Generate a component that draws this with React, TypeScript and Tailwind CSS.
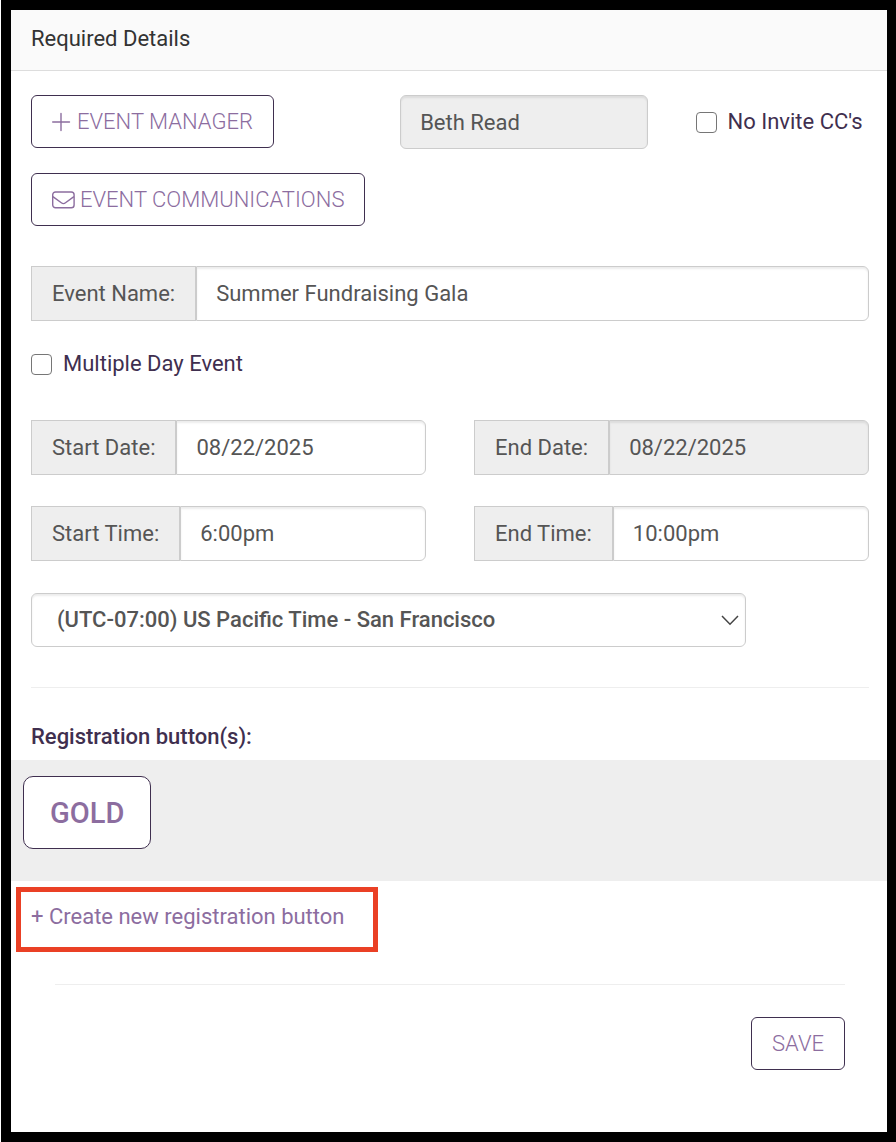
import { FC, ReactNode, useState } from "react";
import clsx from "clsx";

const buttonStyles =
  "inline-flex items-center h-[53px] px-5 border border-[#3f2f4f] rounded-md bg-white text-[#8c6d9f] font-light uppercase whitespace-nowrap";

const inputStyles =
  "w-full min-w-0 border border-[#ccc] text-[#555] shadow-[inset_0_2px_2px_rgba(0,0,0,0.075)] outline-none";

const PlusIcon: FC = () => (
  <svg
    className="w-[20px] h-[20px] mr-[5px]"
    viewBox="0 0 20 20"
    fill="none"
    stroke="currentColor"
    strokeWidth="1.4"
    strokeLinecap="round"
    aria-hidden="true"
  >
    <path d="M9 1.5v17M.7 10h16.8" />
  </svg>
);

const EnvelopeIcon: FC = () => (
  <svg
    className="w-[24px] h-[20px] mr-[4px]"
    viewBox="0 0 24 20"
    fill="none"
    stroke="currentColor"
    strokeWidth="1.4"
    strokeLinejoin="round"
    aria-hidden="true"
  >
    <rect x=".7" y="2" width="21.4" height="15.8" rx="2.8" />
    <path d="M.9 6.6l8.4 6.2c1.3 1 2.9 1 4.2 0l8.4-6.2" />
  </svg>
);

type FieldProps = {
  id: string;
  label: string;
  defaultValue: string;
  disabled?: boolean;
};

const Field: FC<FieldProps> = ({ id, label, defaultValue, disabled }) => {
  return (
    <div className="flex h-[55px]">
      <label
        htmlFor={id}
        className="flex items-center px-5 border border-[#ccc] bg-[#eee] text-[#555] whitespace-nowrap"
      >
        {label}
      </label>
      <input
        id={id}
        type="text"
        defaultValue={defaultValue}
        disabled={disabled}
        className={clsx(
          inputStyles,
          "flex-1 px-[19px] rounded-r-md",
          disabled ? "bg-[#eee]" : "bg-white"
        )}
      />
    </div>
  );
};

const Checkbox: FC<{ id: string; children: ReactNode }> = ({ id, children }) => {
  const [checked, setChecked] = useState(false);

  return (
    <div className="flex items-center gap-[11px]">
      <input
        id={id}
        type="checkbox"
        checked={checked}
        onChange={(e) => setChecked(e.target.checked)}
        className="appearance-none size-[21px] shrink-0 border border-[#767676] rounded-sm bg-white checked:bg-[#8c6d9f]"
      />
      <label htmlFor={id} className="text-[#3f2f4f] whitespace-nowrap">
        {children}
      </label>
    </div>
  );
};

const App: FC = () => {
  return (
    <main className="min-h-screen ml-px border-[10px] border-r-[9px] border-black bg-white font-[Roboto,sans-serif] text-[22px] leading-[30px]">
      <header className="h-[61px] pl-5 pt-3.5 border-b border-[#ddd] bg-[#fafafa]">
        <h1 className="text-[#333]">Required Details</h1>
      </header>

      <form onSubmit={(e) => e.preventDefault()}>
        <div className="pl-5 pr-[18px] pt-6">
          <div className="grid grid-cols-12 gap-x-12">
            <div className="col-span-5">
              <button type="button" className={buttonStyles}>
                <PlusIcon />
                Event Manager
              </button>
            </div>
            <div className="col-span-4">
              <input
                type="text"
                aria-label="Event manager"
                defaultValue="Beth Read"
                disabled
                className={clsx(inputStyles, "h-[54px] px-[19px] rounded-md bg-[#eee]")}
              />
            </div>
            <div className="col-span-3 flex items-center">
              <Checkbox id="no-invite">No Invite CC's</Checkbox>
            </div>
          </div>

          <button type="button" className={clsx(buttonStyles, "mt-6")}>
            <EnvelopeIcon />
            Event Communications
          </button>

          <div className="mt-10">
            <Field
              id="event-name"
              label="Event Name:"
              defaultValue="Summer Fundraising Gala"
            />
          </div>

          <div className="mt-7">
            <Checkbox id="multiple-day">Multiple Day Event</Checkbox>
          </div>

          <div className="mt-[41px] grid grid-cols-2 gap-x-12 gap-y-[31px]">
            <Field id="start-date" label="Start Date:" defaultValue="08/22/2025" />
            <Field id="end-date" label="End Date:" defaultValue="08/22/2025" disabled />
            <Field id="start-time" label="Start Time:" defaultValue="6:00pm" />
            <Field id="end-time" label="End Time:" defaultValue="10:00pm" />
          </div>

          <div className="relative mt-8 w-[715px] max-w-full">
            <select
              aria-label="Time zone"
              className={clsx(
                inputStyles,
                "appearance-none h-[54px] pl-[25px] pr-10 rounded-md bg-white font-medium"
              )}
            >
              <option>(UTC-07:00) US Pacific Time - San Francisco</option>
            </select>
            <svg
              className="absolute right-[7px] top-[22px] w-[18px] h-[11px] pointer-events-none"
              viewBox="0 0 18 11"
              fill="none"
              stroke="#444"
              strokeWidth="1.5"
              aria-hidden="true"
            >
              <path d="M1 1l8 8.2L17 1" />
            </svg>
          </div>

          <hr className="mt-10 border-[#eee]" />
          <h2 className="mt-[34px] text-[#3f2f4f] font-medium">Registration button(s):</h2>
        </div>

        <div className="mt-2 h-[121px] pl-3 pt-4 bg-[#eee]">
          <button
            type="button"
            className="h-[73px] px-[26px] border border-[#3f2f4f] rounded-[10px] bg-white text-[#8c6d9f] text-[29px] font-medium"
          >
            GOLD
          </button>
        </div>

        <div className="mt-1.5 ml-[5px] w-[362px] h-[65px] pl-2.5 pt-2.5 border-[5px] border-[#ea4025]">
          <a href="#new-button" className="text-[#8c6d9f] whitespace-nowrap">
            + Create new registration button
          </a>
        </div>

        <div className="mt-8 ml-11 mr-[42px] pt-8 flex justify-end border-t border-[#eee]">
          <button type="submit" className={buttonStyles}>
            Save
          </button>
        </div>
      </form>
    </main>
  );
};

export default App;
